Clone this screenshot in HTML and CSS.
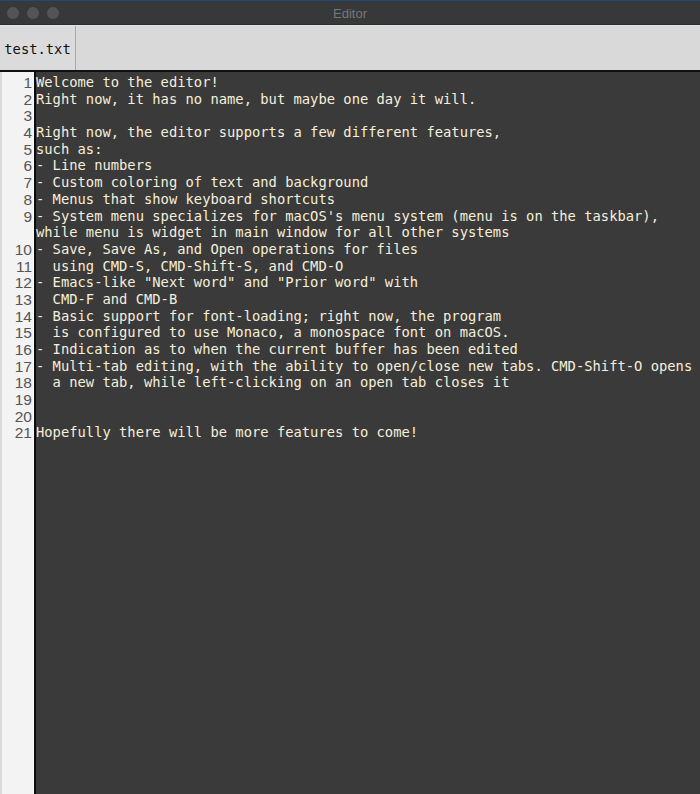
FILE: index.html
```html
<!DOCTYPE html>
<html>
<head>
<meta charset="utf-8">
<link rel="stylesheet" href="styles.css">
</head>
<body>
<div class="window">
  <div class="titlebar">
    <div class="lights"><span class="light"></span><span class="light"></span><span class="light"></span></div>
    <div class="title">Editor</div>
  </div>
  <div class="tabbar">
    <div class="tab">test.txt</div>
  </div>
  <div class="editor">
    <div class="gutter">
      <div class="num">1</div><div class="num">2</div><div class="num">3</div><div class="num">4</div><div class="num">5</div><div class="num">6</div><div class="num">7</div><div class="num">8</div><div class="num num2">9</div><div class="num">10</div><div class="num">11</div><div class="num">12</div><div class="num">13</div><div class="num">14</div><div class="num">15</div><div class="num">16</div><div class="num">17</div><div class="num">18</div><div class="num">19</div><div class="num">20</div><div class="num">21</div>
    </div>
    <div class="sep"></div>
    <div class="text">
      <div class="line">Welcome to the editor!</div>
      <div class="line">Right now, it has no name, but maybe one day it will.</div>
      <div class="line"> </div>
      <div class="line">Right now, the editor supports a few different features,</div>
      <div class="line">such as:</div>
      <div class="line">- Line numbers</div>
      <div class="line">- Custom coloring of text and background</div>
      <div class="line">- Menus that show keyboard shortcuts</div>
      <div class="line">- System menu specializes for macOS's menu system (menu is on the taskbar),</div>
      <div class="line">while menu is widget in main window for all other systems</div>
      <div class="line">- Save, Save As, and Open operations for files</div>
      <div class="line">  using CMD-S, CMD-Shift-S, and CMD-O</div>
      <div class="line">- Emacs-like "Next word" and "Prior word" with</div>
      <div class="line">  CMD-F and CMD-B</div>
      <div class="line">- Basic support for font-loading; right now, the program</div>
      <div class="line">  is configured to use Monaco, a monospace font on macOS.</div>
      <div class="line">- Indication as to when the current buffer has been edited</div>
      <div class="line">- Multi-tab editing, with the ability to open/close new tabs. CMD-Shift-O opens</div>
      <div class="line">  a new tab, while left-clicking on an open tab closes it</div>
      <div class="line"> </div>
      <div class="line"> </div>
      <div class="line">Hopefully there will be more features to come!</div>
    </div>
  </div>
</div>
</body>
</html>
```
FILE: styles.css
```css
html, body {
  margin: 0;
  padding: 0;
  height: 100%;
  background: #3a3a3a;
}
.window {
  display: flex;
  flex-direction: column;
  height: 794px;
  width: 700px;
  overflow: hidden;
}
.titlebar {
  position: relative;
  height: 25px;
  flex: none;
  background: #37383a;
  border-top: 1px solid #24477a;
  box-sizing: border-box;
  border-bottom: 1px solid #2c2c2e;
}
.lights {
  display: flex;
  gap: 8px;
  padding: 6px 0 0 7px;
}
.light {
  width: 12px;
  height: 12px;
  border-radius: 50%;
  background: #535456;
}
.title {
  position: absolute;
  left: 0;
  right: 0;
  top: 5px;
  text-align: center;
  font-family: "Liberation Sans", Arial, sans-serif;
  font-size: 13px;
  color: #76777a;
}
.tabbar {
  flex: none;
  height: 47px;
  background: #d9d9d9;
  border-top: 1px solid #e4e4e4;
  border-bottom: 2px solid #111;
  box-sizing: border-box;
  display: flex;
}
.tab {
  width: 76px;
  border-right: 1px solid #a9a9a9;
  background: #dbdbdb;
  font-family: "DejaVu Sans Mono", monospace;
  font-size: 13.8px;
  color: #111;
  display: flex;
  align-items: center;
  justify-content: center;
  padding-top: 2px;
  box-sizing: border-box;
}
.editor {
  flex: 1;
  display: flex;
  min-height: 0;
}
.gutter {
  width: 30px;
  background: #f3f3f3;
  border-left: 2px solid #dadada;
  padding-top: 2px;
  padding-right: 1px;
  box-sizing: content-box;
  font-family: "Liberation Sans", Arial, sans-serif;
  font-size: 15.5px;
  color: #555;
  text-align: right;
}
.num {
  height: 16.7px;
  line-height: 18px;
}
.num2 {
  height: 33.4px;
}
.sep {
  width: 2px;
  background: #0c0c0c;
  border-left: 1px solid #fafafa;
}
.text {
  flex: 1;
  padding: 2px 0 0 0;
  font-family: "DejaVu Sans Mono", monospace;
  font-size: 13.8px;
  line-height: 16.7px;
  color: #f5efdb;
}
.line {
  height: 16.7px;
  white-space: pre;
}
```
